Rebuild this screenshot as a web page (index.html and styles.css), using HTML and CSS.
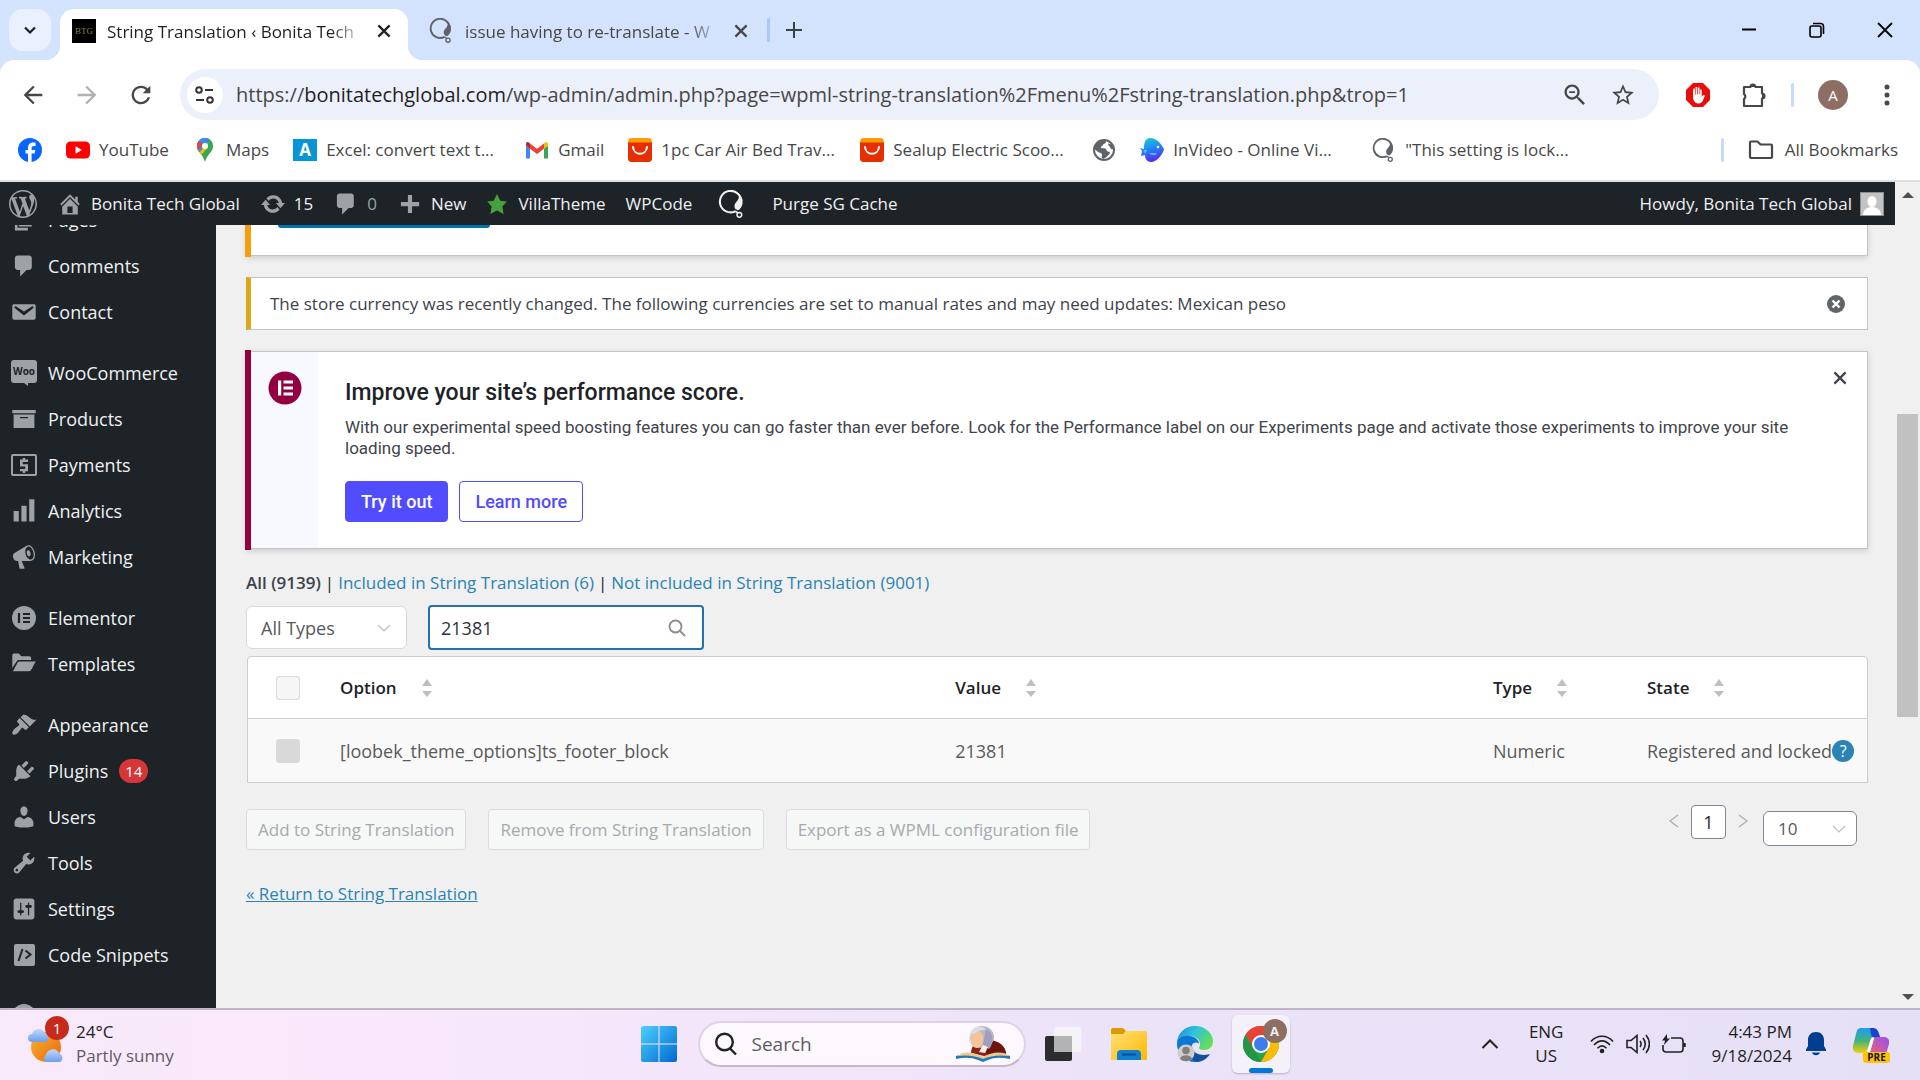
FILE: index.html
```html
<!DOCTYPE html>
<html lang="en">
<head>
<meta charset="utf-8">
<title>String Translation ‹ Bonita Tech Global</title>
<link rel="stylesheet" href="styles.css">
</head>
<body>
<svg class="defs" aria-hidden="true">
  <defs>
    <symbol id="i-x" viewBox="0 0 16 16"><path d="M3 3l10 10M13 3L3 13" fill="none" stroke="currentColor" stroke-width="2"/></symbol>
    <symbol id="i-wpml" viewBox="0 0 24 24"><path d="M14.500 18.400A9.200 9.200 0 1 1 20 9.500" fill="none" stroke="currentColor" stroke-width="1.800"/><path d="M18 3.500c3.800 3.500 4.400 9.500.3 13.300-1 .9-2.600.6-3.400-.5-1.300-1.800-1-4.100.6-5.700 1.900-1.900 2.900-4.300 2.500-7.100z" fill="currentColor"/><path d="M14 18.300c1.200 0 2.200.4 3 1.300" fill="none" stroke="currentColor" stroke-width="1.500"/><circle cx="18.300" cy="21.300" r="2" fill="none" stroke="currentColor" stroke-width="1.300"/></symbol>
    <symbol id="i-bag" viewBox="0 0 24 24"><rect width="24" height="24" rx="4" fill="#ff9a00"/><path d="M0 4.500h24V20a4 4 0 0 1-4 4H4a4 4 0 0 1-4-4z" fill="#e62e04"/><path d="M5 9c1 9 13 9 14 0" fill="none" stroke="#fff" stroke-width="2" stroke-linecap="round"/></symbol>
    <symbol id="i-chev" viewBox="0 0 14 14"><path d="M1 4l6 6 6-6" fill="none" stroke="currentColor" stroke-width="1.200"/></symbol>
    <symbol id="i-sort" viewBox="0 0 12 20"><path d="M6 1l5 7H1zM6 19l5-6H1z" fill="#bfbfbf"/></symbol>
    <symbol id="i-comment" viewBox="0 0 20 20"><path fill="currentColor" d="M5 2h9c1.100 0 2 .9 2 2v7c0 1.100-.9 2-2 2h-2l-5 5v-5H5c-1.100 0-2-.9-2-2V4c0-1.100.9-2 2-2z"/></symbol>
  </defs>
</svg>

<header class="browser">
  <div class="tabstrip">
    <button class="tab-search" aria-label="Search tabs"><svg width="14" height="14" viewBox="0 0 14 14"><path d="M2 4.500l5 5 5-5" fill="none" stroke="#1f1f1f" stroke-width="2.200"/></svg></button>
    <div class="tab active">
      <span class="favicon">BTG</span>
      <span class="tab-title">String Translation ‹ Bonita Tech</span>
      <button class="tab-close" aria-label="Close tab"><svg width="18" height="18"><use href="#i-x"/></svg></button>
    </div>
    <div class="tab">
      <svg class="fav" width="25" height="25"><use href="#i-wpml"/></svg>
      <span class="tab-title">issue having to re-translate - W</span>
      <button class="tab-close" aria-label="Close tab"><svg width="18" height="18"><use href="#i-x"/></svg></button>
    </div>
    <span class="vsep"></span>
    <button class="new-tab" aria-label="New tab"><svg width="18" height="18" viewBox="0 0 18 18"><path d="M9 1v16M1 9h16" stroke="#3c3f43" stroke-width="2"/></svg></button>
    <div class="win-controls">
      <button aria-label="Minimize"><svg width="16" height="16" viewBox="0 0 16 16"><path d="M1 7.500h14" stroke="#000" stroke-width="2"/></svg></button>
      <button aria-label="Restore"><svg width="16" height="16" viewBox="0 0 16 16" fill="none" stroke="#000" stroke-width="1.600"><rect x="1" y="4" width="11" height="11" rx="2"/><path d="M4 1.500h7.500a3 3 0 0 1 3 3V12"/></svg></button>
      <button aria-label="Close"><svg width="18" height="18" viewBox="0 0 18 18"><path d="M2 2l14 14M16 2L2 16" stroke="#000" stroke-width="1.800"/></svg></button>
    </div>
  </div>

  <div class="toolbar">
    <div class="nav">
      <button aria-label="Back"><svg width="28" height="28" viewBox="0 0 24 24"><path fill="#474747" d="M20 11H7.830l5.590-5.590L12 4l-8 8 8 8 1.410-1.410L7.830 13H20z"/></svg></button>
      <button aria-label="Forward"><svg width="28" height="28" viewBox="0 0 24 24"><path fill="#b0b0b0" d="M4 11h12.170l-5.590-5.590L12 4l8 8-8 8-1.410-1.410L16.170 13H4z"/></svg></button>
      <button aria-label="Reload"><svg width="28" height="28" viewBox="0 0 24 24"><path fill="#474747" d="M17.650 6.350C16.200 4.900 14.210 4 12 4c-4.420 0-7.990 3.580-7.990 8s3.570 8 7.990 8c3.730 0 6.840-2.550 7.730-6h-2.080c-.82 2.330-3.040 4-5.650 4-3.310 0-6-2.690-6-6s2.690-6 6-6c1.660 0 3.140.69 4.220 1.780L13.500 10.500H20V4z"/></svg></button>
    </div>
    <div class="omnibox">
      <span class="site-info"><svg width="22" height="22" viewBox="0 0 22 22" fill="none" stroke="#333" stroke-width="2"><circle cx="5" cy="6" r="2.800"/><path d="M11 6h8M2 16h8"/><circle cx="16" cy="16" r="2.800"/></svg></span>
      <span class="url">https://<b>bonitatechglobal.com</b>/wp-admin/admin.php?page=wpml-string-translation%2Fmenu%2Fstring-translation.php&amp;trop=1</span>
      <button aria-label="Zoom"><svg width="28" height="28" viewBox="0 0 24 24"><path fill="#474747" d="M15.500 14h-.79l-.28-.27C15.410 12.590 16 11.110 16 9.500 16 5.910 13.090 3 9.500 3S3 5.910 3 9.500 5.910 16 9.500 16c1.610 0 3.090-.59 4.230-1.570l.27.28v.79l5 4.990L20.490 19zm-6 0C7.010 14 5 11.990 5 9.500S7.010 5 9.500 5 14 7.010 14 9.500 11.990 14 9.500 14zM7 8.800h5v1.500H7z"/></svg></button>
      <button aria-label="Bookmark this tab"><svg width="26" height="26" viewBox="0 0 24 24"><path fill="#474747" d="M22 9.240l-7.190-.62L12 2 9.190 8.630 2 9.240l5.460 4.730L5.820 21 12 17.270 18.180 21l-1.630-7.030zM12 15.400l-3.760 2.270 1-4.280-3.320-2.880 4.380-.38L12 6.100l1.710 4.040 4.380.38-3.320 2.880 1 4.280z"/></svg></button>
    </div>
    <div class="ext">
      <button aria-label="AdBlock"><svg width="26" height="26" viewBox="0 0 26 26"><path d="M8 1h10l7 7v10l-7 7H8l-7-7V8z" fill="#ea0b0b"/><path d="M8 9.500v5.500c0 4 2.500 6.500 5.500 6.500 2.500 0 3.800-1.500 4.700-3.500l1.800-4.500-1.500-.7-1.800 2V7.500h-1.500v5h-.7V5.500h-1.600v7h-.7V5h-1.600v7.500h-.7V6.500H8.500z" fill="#fff"/></svg></button>
      <button aria-label="Extensions"><svg width="28" height="28" viewBox="0 0 28 28"><path d="M4 6h6.500a2.500 2.500 0 0 1 5 0H22v6.500a2 2 0 0 1 0 5V25H4v-7a3 3 0 0 0 0-5z" fill="none" stroke="#474747" stroke-width="2.200" stroke-linejoin="round"/><path d="M10.500 6a2.500 2.500 0 0 1 5 0zM22 12.500a2 2 0 0 1 0 5z" fill="#474747"/></svg></button>
      <span class="vsep"></span>
      <button class="avatar" aria-label="Profile">A</button>
      <button aria-label="Menu"><svg width="8" height="24" viewBox="0 0 8 24" fill="#474747"><circle cx="4" cy="4" r="2.500"/><circle cx="4" cy="12" r="2.500"/><circle cx="4" cy="20" r="2.500"/></svg></button>
    </div>
  </div>

  <nav class="bookmarks">
    <a href="#" aria-label="Facebook"><svg width="24" height="24" viewBox="0 0 24 24"><circle cx="12" cy="12" r="12" fill="#0866ff"/><path d="M10 24v-8.500H7.500V12H10v-1.600C10 6.400 11.800 4.500 15.600 4.500c.7 0 1.500.1 2 .3v3.300h-1.400c-1.900 0-2.600.7-2.600 2.500V12h3.700l-.7 3.500h-3V24z" fill="#fff"/></svg></a>
    <a href="#"><svg width="24" height="24" viewBox="0 0 24 24"><rect y="3.500" width="24" height="17" rx="4.500" fill="#f00"/><path d="M9.500 8.200v7.600l6.500-3.800z" fill="#fff"/></svg><span>YouTube</span></a>
    <a href="#"><svg width="24" height="24" viewBox="0 0 24 24"><path d="M12 0c4.500 0 8 3.500 8 8 0 3.800-2 5.800-4.200 8.500C13.600 19.500 13 21 12 24c-1-3-1.600-4.500-3.800-7.500C6 13.800 4 11.800 4 8c0-4.500 3.500-8 8-8z" fill="#34a853"/><path d="M20 8c0-2.900-1.500-5.400-3.800-6.800L6.300 13.900C5 12.300 4 10.600 4 8c0-4.500 3.500-8 8-8s8 3.500 8 8z" fill="#4285f4"/><path d="M5.900 2.900L9.800 6.200 4.900 12C4.300 10.800 4 9.500 4 8c0-1.900.7-3.700 1.900-5.100z" fill="#ea4335"/><path d="M6.500 14.300L14.400 5l.6 4.500-6.600 7.300c-.6-.9-1.300-1.700-1.900-2.500z" fill="#fbbc04"/><circle cx="12" cy="8" r="3" fill="#fff"/></svg><span>Maps</span></a>
    <a href="#"><i class="a-logo">A</i><span class="long">Excel: convert text t...</span></a>
    <a href="#"><svg width="24" height="24" viewBox="0 0 24 24"><path d="M1 20.500h4V10.500L1 7.500z" fill="#4285f4"/><path d="M19 20.500h4V7.500l-4 3z" fill="#34a853"/><path d="M1 7.500l4 3.200V5.500L3.500 4.300C2.200 3.400 1 4.500 1 6z" fill="#c5221f"/><path d="M19 10.700l4-3.200V6c0-1.500-1.200-2.600-2.500-1.700L19 5.500z" fill="#fbbc04"/><path d="M5 5.500l7 5.300 7-5.300v5.200L12 16l-7-5.300z" fill="#ea4335"/></svg><span>Gmail</span></a>
    <a href="#"><svg width="24" height="24"><use href="#i-bag"/></svg><span class="long">1pc Car Air Bed Trav...</span></a>
    <a href="#"><svg width="24" height="24"><use href="#i-bag"/></svg><span class="long">Sealup Electric Scoo...</span></a>
    <a href="#" aria-label="Site"><svg width="24" height="24" viewBox="0 0 24 24"><circle cx="12" cy="12" r="10" fill="#fff" stroke="#5f6368" stroke-width="2"/><path d="M3 8C5 3.500 9 2 13.500 2.500c1 1.500.3 2.700-1.300 3.200-1.700.6-1 1.800-2.500 2.500-1 .5-1.200 1.800.2 2 1.800.2 4.400-.3 4.600 1.800.1 1.300 1.300 1.500 2.500 1.700 1.300.2 1 1.800 0 2.800-2 2-3.500 3.500-6 4.500-1.500-1-1.500-2.500-1-4 .4-1.400-1-2-2.200-2.300C5.500 14.200 4 12 2.500 11zM16 5.500l4 1 1.500 4.500c-1.500.5-3-.2-3.300-1.600-.2-1.200-2.500-1.800-2.200-3.900z" fill="#5f6368"/></svg></a>
    <a href="#"><svg width="24" height="24" viewBox="0 0 24 24"><defs><linearGradient id="inv" x1="0" y1="0" x2="0.300" y2="1"><stop offset="0" stop-color="#1fd6c4"/><stop offset=".5" stop-color="#1d8cf8"/><stop offset="1" stop-color="#5b2cf0"/></linearGradient></defs><path d="M10 0c6 0 10 4 14 11-1 5-7 13-13 13-4 0-6-3-6-7l-4 1 1-5-2-3 4 1C4 5 5 0 10 0z" fill="url(#inv)"/><path d="M9 15c3 3 7 3 8 0z" fill="#3fc3ff"/><circle cx="18" cy="9" r="1.300" fill="#fff"/><path d="M4 12h3l-2 4z" fill="#6bc8ff"/></svg><span class="long">InVideo - Online Vi...</span></a>
    <a href="#" class="w"><svg width="24" height="24"><use href="#i-wpml"/></svg><span>"This setting is lock...</span></a>
    <span class="vsep"></span>
    <a href="#" class="all"><svg width="26" height="24" viewBox="0 0 26 24"><path d="M2 4.500a1 1 0 0 1 1-1h6.500l3 3H23a1 1 0 0 1 1 1V19a1 1 0 0 1-1 1H3a1 1 0 0 1-1-1z" fill="none" stroke="#474747" stroke-width="2.200"/></svg><span>All Bookmarks</span></a>
  </nav>
</header>

<div class="viewport">
  <div class="page">
    <nav class="adminbar">
      <a href="#" aria-label="WordPress"><svg width="28" height="28" viewBox="0 0 20 20"><path fill="#9ca2a7" d="M20 10c0-5.510-4.490-10-10-10C4.480 0 0 4.490 0 10c0 5.520 4.480 10 10 10 5.510 0 10-4.480 10-10zM7.780 15.370L4.370 6.220c.55-.02 1.170-.08 1.170-.08.5-.06.44-1.130-.06-1.110 0 0-1.450.11-2.370.11-.18 0-.37 0-.58-.01C4.120 2.690 6.870 1.110 10 1.110c2.330 0 4.450.87 6.050 2.340-.68-.11-1.650.39-1.650 1.580 0 .74.45 1.360.9 2.100.35.61.55 1.360.55 2.460 0 1.490-1.400 5-1.400 5l-3.030-8.370c.54-.02.82-.17.82-.17.5-.05.44-1.250-.06-1.220 0 0-1.440.12-2.380.12-.87 0-2.330-.12-2.330-.12-.5-.03-.56 1.200-.06 1.220l.92.08 1.260 3.410zM17.410 10c.24-.64.74-1.870.43-4.250.7 1.290 1.050 2.710 1.050 4.250 0 3.290-1.730 6.240-4.400 7.780.97-2.590 1.940-5.200 2.920-7.780zM6.100 18.090C3.120 16.650 1.110 13.530 1.110 10c0-1.300.23-2.480.72-3.590C3.250 10.300 4.670 14.200 6.100 18.090zm4.030-6.630l2.580 6.980c-.86.29-1.760.45-2.710.45-.79 0-1.570-.11-2.290-.33.81-2.380 1.620-4.740 2.420-7.100z"/></svg></a>
      <a href="#"><svg width="26" height="26" viewBox="0 0 20 20"><path fill="#9ca2a7" d="M16 8.500l1.530 1.530-1.060 1.060L10 4.600l-6.470 6.490-1.060-1.060L10 2.500l4 4v-2h2zm-6-2.460l6 5.990V18H4v-5.970zM12 17v-5H8v5z"/></svg><span>Bonita Tech Global</span></a>
      <a href="#"><svg width="26" height="26" viewBox="0 0 20 20"><path fill="#9ca2a7" d="M10.200 3.280c3.530 0 6.430 2.610 6.920 6h2.080l-3.500 4-3.500-4h2.320c-.45-1.970-2.210-3.450-4.320-3.450-1.450 0-2.730.71-3.540 1.780L4.950 5.660C6.230 4.200 8.110 3.280 10.200 3.280zm-.4 13.440c-3.520 0-6.430-2.610-6.920-6H.8l3.500-4 3.500 4H5.480c.45 1.970 2.210 3.450 4.320 3.450 1.450 0 2.730-.71 3.540-1.780l1.710 1.950c-1.280 1.460-3.150 2.380-5.250 2.380z"/></svg><span>15</span></a>
      <a href="#" class="muted"><svg width="26" height="26"><use href="#i-comment"/></svg><span>0</span></a>
      <a href="#"><svg width="26" height="26" viewBox="0 0 20 20"><path fill="#9ca2a7" d="M17 8.500v3.200h-5.400V17H8.400v-5.300H3V8.500h5.400V3h3.200v5.500z"/></svg><span>New</span></a>
      <a href="#" class="villa"><svg width="22" height="22" viewBox="0 0 20 20"><path fill="#46a03c" d="M10 1l3 6 6 .75-4.120 4.620L16 19l-6-3-6 3 1.130-6.630L1 7.750 7 7z"/></svg><span>VillaTheme</span></a>
      <a href="#"><span>WPCode</span></a>
      <a href="#" class="wpml" aria-label="WPML"><svg width="28" height="28"><use href="#i-wpml"/></svg></a>
      <a href="#"><span>Purge SG Cache</span></a>
      <a href="#" class="howdy"><span>Howdy, Bonita Tech Global</span><svg width="24" height="24" viewBox="0 0 24 24"><rect x=".5" y=".5" width="23" height="23" fill="#c3c3c3" stroke="#8c8f94"/><ellipse cx="12" cy="9.500" rx="4.500" ry="5.500" fill="#fff"/><path d="M3 23c0-5 4-8 9-8s9 3 9 8z" fill="#fff"/></svg></a>
    </nav>

    <div class="columns">
      <aside class="sidebar">
        <ul>
          <li><a href="#"><svg viewBox="0 0 20 20"><path d="M6 15V2h10v13zm-1 1h8v2H3V5h2z"/></svg><span>Pages</span></a></li>
          <li><a href="#"><svg viewBox="0 0 20 20"><use href="#i-comment"/></svg><span>Comments</span></a></li>
          <li><a href="#"><svg viewBox="0 0 20 20"><path d="M2.500 4h15c1 0 1.500.5 1.500 1.500v9c0 1-.5 1.500-1.500 1.500h-15c-1 0-1.500-.5-1.500-1.500v-9C1 4.500 1.500 4 2.500 4zm7.500 8.600l7-5.500c.3-.3.400-.7.100-1.100-.3-.4-.8-.4-1.100-.2L10 9.700 4 5.800c-.3-.2-.8-.2-1.100.2-.3.4-.2.8.1 1.100z"/></svg><span>Contact</span></a></li>
          <li class="gap"><a href="#"><svg viewBox="0 0 26 26"><path d="M3 0h20a3 3 0 0 1 3 3v17a3 3 0 0 1-3 3h-6v3l-4-3H3a3 3 0 0 1-3-3V3a3 3 0 0 1 3-3z"/><text x="13" y="15" text-anchor="middle" class="woo">Woo</text></svg><span>WooCommerce</span></a></li>
          <li><a href="#"><svg viewBox="0 0 20 20"><path d="M19 3v2.500H1V3zM2 6.500h16V17H2zm11 3v-1H7v1z"/></svg><span>Products</span></a></li>
          <li><a href="#"><svg viewBox="0 0 26 26"><rect x="1" y="3" width="24" height="20" rx="1" fill="none" stroke="#9ca2a7" stroke-width="2"/><path d="M17 10V7.500h-2.800V6h-2.400v1.500H9v7h5.200V17H9v2.300h2.800V21h2.400v-1.700H17v-7h-5.200V10z"/></svg><span>Payments</span></a></li>
          <li><a href="#"><svg viewBox="0 0 20 20"><path d="M18 18V1h-4v17zM12 18V6H8v12zM6 18v-8H2v8z"/></svg><span>Analytics</span></a></li>
          <li><a href="#"><svg viewBox="0 0 20 20"><path fill-rule="evenodd" d="M18.150 5.940c.46 1.620.38 3.220-.02 4.480-.42 1.280-1.260 2.180-2.300 2.480-.16.06-.26.06-.4.06-.06.02-.12.02-.18.02-.06.02-.14.02-.22.02h-6.800l2.220 5.500c.02.14-.06.26-.14.34-.08.1-.24.16-.34.16H6.950c-.1 0-.26-.06-.34-.16-.08-.08-.16-.2-.14-.34l-1-5.500H4.250l-.02-.02c-.5.06-1.080-.18-1.540-.62s-.88-1.080-1.060-1.880c-.24-.8-.2-1.560-.02-2.200.18-.62.58-1.080 1.060-1.300l.02-.02 9-5.400c.1-.06.18-.1.24-.16.06-.04.14-.08.24-.12.16-.08.28-.12.5-.18 1.040-.3 2.240.1 3.220.98s1.840 2.240 2.260 3.860zm-2.580 5.980h-.02c.4-.1.74-.34 1.040-.7.58-.7.86-1.760.86-3.040 0-.64-.1-1.300-.28-1.980-.34-1.360-1.020-2.500-1.780-3.240s-1.680-1.100-2.460-.88c-.82.22-1.400.96-1.700 2-.32 1.040-.28 2.360.06 3.720.38 1.360 1 2.500 1.800 3.240.78.74 1.620 1.100 2.480.88zm-2.540-7.080c.22-.04.42-.02.62.04.38.16.76.48 1.020 1s.42 1.200.42 1.780c0 .3-.04.56-.12.8-.18.48-.44.84-.86.94-.34.1-.8-.06-1.140-.4s-.64-.86-.78-1.500c-.18-.62-.12-1.240.02-1.720s.48-.84.82-.94z"/></svg><span>Marketing</span></a></li>
          <li class="gap"><a href="#"><svg viewBox="0 0 26 26"><circle cx="13" cy="13" r="12"/><path d="M8 8v10M12 9h7M12 13h7M12 17h7" stroke="#1d2327" stroke-width="2.200"/></svg><span>Elementor</span></a></li>
          <li><a href="#"><svg viewBox="0 0 20 20"><path d="M1 3.500C1 2.700 1.500 2 2.300 2h3.500c1 0 1.400 2 2.200 2H14c.9 0 1.500.6 1.500 1.500V7H6.500c-1 0-1.700.3-2.300 1.200L1 13z"/><path d="M6.500 8H19l-3.300 6.300c-.4.8-1 1.200-1.900 1.200H1.500l3.600-6.700c.3-.5.8-.8 1.400-.8z"/></svg><span>Templates</span></a></li>
          <li class="gap"><a href="#"><svg viewBox="0 0 20 20"><path d="M14.480 11.060L7.410 3.990l1.500-1.500c.5-.56 2.300-.47 3.510.32 1.210.8 1.430 1.280 2.910 2.100 1.180.64 2.450 1.260 4.450.85zm-.71.71L6.700 4.700 4.930 6.470c-.39.39-.39 1.020 0 1.410l1.060 1.060c.39.39.39 1.030 0 1.420-.6.6-1.430 1.110-2.210 1.690-.35.26-.7.53-1.010.84C1.430 14.230.4 16.080 1.400 17.070c.99 1 2.840-.03 4.180-1.360.31-.31.58-.66.85-1.020.57-.78 1.080-1.610 1.690-2.210.39-.39 1.020-.39 1.410 0l1.060 1.060c.39.39 1.020.39 1.410 0z"/></svg><span>Appearance</span></a></li>
          <li><a href="#"><svg viewBox="0 0 20 20"><path d="M13.110 4.360L9.870 7.600 8 5.730l3.240-3.240c.35-.34 1.050-.2 1.560.32.52.51.66 1.210.31 1.550zm-8 1.770l.91-1.120 9.010 9.010-1.190.84c-.71.71-2.630 1.160-3.820 1.160H6.140L4.900 17.260c-.59.59-1.540.59-2.120 0-.59-.58-.59-1.530 0-2.120l1.240-1.240v-3.880c0-1.130.4-3.190 1.090-3.890zm7.260 3.970l3.240-3.240c.34-.35 1.040-.21 1.550.31.52.51.66 1.210.31 1.550l-3.240 3.250z"/></svg><span>Plugins</span><b class="count">14</b></a></li>
          <li><a href="#"><svg viewBox="0 0 20 20"><path d="M10 9.250c-2.270 0-2.730-3.440-2.730-3.440C7 4.020 7.820 2 9.970 2c2.160 0 2.980 2.020 2.710 3.810 0 0-.41 3.440-2.680 3.440zm0 2.570L12.720 10c2.390 0 4.520 2.330 4.520 4.530v2.490s-3.650 1.130-7.240 1.130c-3.650 0-7.240-1.130-7.240-1.130v-2.490c0-2.250 1.940-4.480 4.470-4.480z"/></svg><span>Users</span></a></li>
          <li><a href="#"><svg viewBox="0 0 20 20"><path d="M16.680 9.770c-1.340 1.340-3.300 1.670-4.950.99l-5.410 6.520c-.99.99-2.590.99-3.580 0s-.99-2.590 0-3.570l6.520-5.420c-.68-1.650-.35-3.610.99-4.950 1.280-1.280 3.120-1.620 4.720-1.060l-2.890 2.890 2.820 2.820 2.860-2.870c.53 1.580.18 3.390-1.080 4.650zM3.810 16.210c.4.39 1.040.39 1.430 0 .4-.4.4-1.040 0-1.430-.39-.4-1.030-.4-1.430 0-.39.39-.39 1.030 0 1.430z"/></svg><span>Tools</span></a></li>
          <li><a href="#"><svg viewBox="0 0 20 20"><path d="M18 16V4c0-1.100-.9-2-2-2H4c-1.100 0-2 .9-2 2v12c0 1.100.9 2 2 2h12c1.100 0 2-.9 2-2zM8 11h1c.55 0 1 .45 1 1s-.45 1-1 1H8v1.500c0 .28-.22.5-.5.5s-.5-.22-.5-.5V13H6c-.55 0-1-.45-1-1s.45-1 1-1h1V5.500c0-.28.22-.5.5-.5s.5.22.5.5zm5-2h-1c-.55 0-1-.45-1-1s.45-1 1-1h1V5.500c0-.28.22-.5.5-.5s.5.22.5.5V7h1c.55 0 1 .45 1 1s-.45 1-1 1h-1v5.500c0 .28-.22.5-.5.5s-.5-.22-.5-.5z"/></svg><span>Settings</span></a></li>
          <li><a href="#"><svg viewBox="0 0 26 26"><rect x="3" y="2" width="21" height="22" rx="2"/><path d="M11.500 7l-4 12M14.500 8.500l5 4-5 4" fill="none" stroke="#1d2327" stroke-width="2"/></svg><span>Code Snippets</span></a></li>
          <li class="gap"><a href="#" aria-label="More"><svg viewBox="0 0 26 26"><circle cx="13" cy="13" r="12"/></svg></a></li>
        </ul>
      </aside>

      <main class="content">
        <section class="notice raised orange"><button class="update-btn" aria-label="Update"></button></section>

        <section class="notice currency">
          <p>The store currency was recently changed. The following currencies are set to manual rates and may need updates: Mexican peso</p>
          <button aria-label="Dismiss"><svg width="20" height="20" viewBox="0 0 20 20"><circle cx="10" cy="10" r="9" fill="#60646b"/><path d="M6.500 6.500l7 7M13.500 6.500l-7 7" stroke="#fff" stroke-width="2.400"/></svg></button>
        </section>

        <section class="notice raised elementor">
          <div class="e-aside"><svg width="34" height="34" viewBox="0 0 34 34"><circle cx="17" cy="17" r="16.500" fill="#93003f"/><path d="M10 9.500h3.200v15H10zM15.500 9.500H25v3h-9.500zM15.500 15.500H25v3h-9.500zM15.500 21.500H25v3h-9.500z" fill="#fff"/></svg></div>
          <div class="e-body">
            <h3>Improve your site’s performance score.</h3>
            <p>With our experimental speed boosting features you can go faster than ever before. Look for the Performance label on our Experiments page and activate those experiments to improve your site loading speed.</p>
            <div class="e-actions"><button class="e-btn solid">Try it out</button><button class="e-btn">Learn more</button></div>
          </div>
          <button class="e-close" aria-label="Dismiss"><svg width="18" height="18"><use href="#i-x"/></svg></button>
        </section>

        <p class="filters"><b>All (9139)</b><i>|</i><a href="#">Included in String Translation (6)</a><i>|</i><a href="#">Not included in String Translation (9001)</a></p>

        <div class="controls">
          <label class="select types"><select aria-label="Type"><option>All Types</option></select><svg width="14" height="14"><use href="#i-chev"/></svg></label>
          <label class="search"><input type="text" value="21381" aria-label="Search strings"><svg width="18" height="18" viewBox="0 0 18 18" fill="none" stroke="#8c8c8c" stroke-width="1.800"><circle cx="7.500" cy="7.500" r="6"/><path d="M12 12l5 5"/></svg></label>
        </div>

        <table class="strings">
          <colgroup><col class="c-check"><col class="c-option"><col><col class="c-type"><col class="c-state"></colgroup>
          <thead><tr>
            <th><input type="checkbox" aria-label="Select all"></th>
            <th><span>Option<svg width="12" height="20"><use href="#i-sort"/></svg></span></th>
            <th><span>Value<svg width="12" height="20"><use href="#i-sort"/></svg></span></th>
            <th><span>Type<svg width="12" height="20"><use href="#i-sort"/></svg></span></th>
            <th><span>State<svg width="12" height="20"><use href="#i-sort"/></svg></span></th>
          </tr></thead>
          <tbody><tr>
            <td><input type="checkbox" class="locked" disabled aria-label="Select row"></td>
            <td>[loobek_theme_options]ts_footer_block</td>
            <td>21381</td>
            <td>Numeric</td>
            <td><div class="state">Registered and locked<a href="#" class="help">?</a></div></td>
          </tr></tbody>
        </table>

        <div class="table-foot">
          <div class="bulk">
            <button disabled>Add to String Translation</button>
            <button disabled>Remove from String Translation</button>
            <button disabled>Export as a WPML configuration file</button>
          </div>
          <div class="pager">
            <button class="arrow" aria-label="Previous page"><svg width="12" height="16" viewBox="0 0 12 16"><path d="M10 2L2 8l8 6" fill="none" stroke="#b0b0b0" stroke-width="1.400"/></svg></button>
            <button class="current">1</button>
            <button class="arrow" aria-label="Next page"><svg width="12" height="16" viewBox="0 0 12 16"><path d="M2 2l8 6-8 6" fill="none" stroke="#b0b0b0" stroke-width="1.400"/></svg></button>
            <label class="select size"><select aria-label="Rows per page"><option>10</option></select><svg width="14" height="14"><use href="#i-chev"/></svg></label>
          </div>
        </div>

        <p class="return"><a href="#">« Return to String Translation</a></p>
      </main>
    </div>
  </div>
  <div class="scrollbar"><i class="up"></i><i class="track"><b></b></i><i class="down"></i></div>
</div>

<footer class="taskbar">
  <div class="weather">
    <span class="w-icon"><svg width="36" height="40" viewBox="0 0 36 40"><defs><linearGradient id="sun" x1="0" y1="0" x2="1" y2="1"><stop offset="0" stop-color="#f9b530"/><stop offset="1" stop-color="#e8650d"/></linearGradient><linearGradient id="cl" x1="0" y1="0" x2="0" y2="1"><stop offset="0" stop-color="#c0d9fc"/><stop offset="1" stop-color="#6e9eec"/></linearGradient></defs><circle cx="18" cy="23" r="15" fill="url(#sun)"/><path d="M4 18a4 4 0 0 1 0-8 7 7 0 0 1 13-1 5 5 0 0 1 1 9z" fill="url(#cl)"/><path d="M18 38a4 4 0 0 1 0-7 7 7 0 0 1 13-2 5 5 0 0 1 1 9z" fill="url(#cl)"/></svg><b>1</b></span>
    <div><p>24°C</p><p class="sub">Partly sunny</p></div>
  </div>

  <div class="apps">
    <button aria-label="Start"><svg width="36" height="36" viewBox="0 0 36 36"><defs><linearGradient id="win" x1="0" y1="0" x2="1" y2="1"><stop offset="0" stop-color="#4cd0ff"/><stop offset="1" stop-color="#0069d0"/></linearGradient></defs><path d="M2 0h15.500v17.500H0V2a2 2 0 0 1 2-2zM18.500 0H34a2 2 0 0 1 2 2v15.500H18.500zM0 18.500h17.500V36H2a2 2 0 0 1-2-2zM18.500 18.500H36V34a2 2 0 0 1-2 2H18.500z" fill="url(#win)"/></svg></button>
    <label class="tb-search"><svg width="24" height="24" viewBox="0 0 24 24" fill="none" stroke="#222" stroke-width="2.400"><circle cx="10.500" cy="10" r="8.300"/><path d="M16 16.500l6 6"/></svg><input type="text" placeholder="Search" aria-label="Search"><svg width="54" height="38" viewBox="0 0 54 38"><path d="M0 31q13-5 27 2 14-7 27-2v3q-14-3-22 1l-5 2-5-2q-9-4-22-1z" fill="#2477b8"/><path d="M15 28c0-7 5-12 12-13 10-1 21 2 23 14l-22 2z" fill="#8a2216"/><path d="M28 22l8-6c8 1 13 5 14 12l-18 2z" fill="#6d150e"/><ellipse cx="26" cy="12" rx="12" ry="11" fill="#b9b8c8"/><path d="M30 4c8 3 8 15 3 20l-6-4z" fill="#a09fbd"/><path d="M16 9c3-4 10-4 11 2 1 6-2 12-6 12-4 0-7-4-6-8z" fill="#f6c39b"/><path d="M14 9C16 1 26-1 30 5c-5-1-9 3-14 4-2 3-2 8 0 12-3-2-4-7-2-12z" fill="#dddde6"/><path d="M27 20l5 2-3 6-6-1z" fill="#f5efe4"/><path d="M1 31q4-1 5-3 11-2 21 4 10-6 21-4l5 3q-15-2-26 3Q16 29 1 31z" fill="#ecca8f"/></svg></label>
    <button class="view" aria-label="Task view"><svg width="36" height="36" viewBox="0 0 36 36"><rect y="10" width="27" height="25" rx="2" fill="#2d2d2d"/><rect x="9" y="1" width="27" height="25" rx="2" fill="#f4f4f6"/><rect x="9" y="10" width="18" height="16" fill="#b3b3b5"/></svg></button>
    <button class="files" aria-label="File Explorer"><svg width="36" height="36" viewBox="0 0 36 36"><defs><linearGradient id="fol" x1="0" y1="0" x2="1" y2="1"><stop offset="0" stop-color="#ffe07a"/><stop offset="1" stop-color="#ffb900"/></linearGradient></defs><path d="M0 4a2 2 0 0 1 2-2h10l3 3-2 4H0z" fill="#dd9a00"/><path d="M0 8h12l3-3h19a2 2 0 0 1 2 2v27H0z" fill="url(#fol)"/><path d="M6 34v-6a4 4 0 0 1 4-4h16a4 4 0 0 1 4 4v6z" fill="#0f7fd0"/><path d="M11 28.500h14" stroke="#0a4f96" stroke-width="2"/></svg></button>
    <button class="edge" aria-label="Edge"><svg width="36" height="36" viewBox="0 0 36 36"><defs><linearGradient id="eg" x1="0" y1="0" x2="1" y2=".5"><stop offset="0" stop-color="#1b86d8"/><stop offset=".5" stop-color="#2fc4dc"/><stop offset="1" stop-color="#62de58"/></linearGradient></defs><path d="M0 18C0 7 8 0 18 0c11 0 18 8 18 15 0 6-4 9-9 9-3 0-5-1-5-2 0-1 1-1 1-4 0-4-4-8-10-8C6 10 1 14 0 18z" fill="url(#eg)"/><path d="M0 18c0-6 6-9 12-8 6 0 10 4 10 8-2-2-5-2-7 1-3 5 0 14 10 15-3 2-5 2-7 2C8 36 0 28 0 18z" fill="#0a78d4"/><path d="M15 20c0 6 6 9 12 9 3 0 5-1 6-1-3 5-8 8-14 8-5-2-9-10-4-16z" fill="#124f9e"/><circle cx="9" cy="27" r="8.500" fill="#cfcdcb"/><circle cx="9" cy="24.500" r="3.800" fill="#837f7c"/><path d="M3 33c1-5 11-5 12 0-3 3-9 3-12 0z" fill="#837f7c"/></svg></button>
    <button class="chrome" aria-label="Chrome"><svg width="36" height="36" viewBox="0 0 36 36"><circle cx="18" cy="18" r="18" fill="#2ba24c"/><path d="M18 18L2.400 9A18 18 0 0 1 33.600 9z" fill="#ea4335"/><path d="M2.400 9l8 13 7.600-4z" fill="#ea4335"/><path d="M18 9h15.600A18 18 0 0 1 18 36l8-14z" fill="#fbbc04"/><path d="M2.400 9l8 13.500L18 36A18 18 0 0 1 2.400 9z" fill="#24964a"/><circle cx="18" cy="18" r="9" fill="#fff"/><circle cx="18" cy="18" r="7" fill="#3b7ded"/></svg><b>A</b></button>
  </div>

  <div class="tray">
    <button class="chev" aria-label="Show hidden icons"><svg width="18" height="12" viewBox="0 0 18 12"><path d="M1.500 10L9 2.500l7.500 7.500" fill="none" stroke="#222" stroke-width="2"/></svg></button>
    <div class="lang"><p>ENG</p><p>US</p></div>
    <div class="status">
      <svg width="24" height="20" viewBox="0 0 24 20" fill="none" stroke="#222" stroke-width="1.600"><path d="M1 7.500c6-7 16-7 22 0M4 11c5-5.500 11-5.500 16 0M7.500 14.200c3-3 6-3 9 0"/><circle cx="12" cy="17" r="1.500" fill="#222"/></svg>
      <svg width="24" height="20" viewBox="0 0 24 20" fill="none" stroke="#222" stroke-width="1.600"><path d="M1 6.500h4l6-5v17l-6-5H1zM14 7c1.500 2 1.500 4 0 6M17 4c3 4 3 8 0 12M20 1c4.500 5.500 4.500 12.500 0 18"/></svg>
      <svg width="24" height="20" viewBox="0 0 24 20" fill="none" stroke="#222" stroke-width="1.600"><path d="M9 4h9a3 3 0 0 1 3 3v8a3 3 0 0 1-3 3H4a3 3 0 0 1-3-3V11"/><path d="M5 0L0 6.500h3L2 11l6-6.500H5z" fill="#222" stroke="none"/><path d="M22.500 9v4" stroke-width="2.500"/></svg>
    </div>
    <div class="clock"><p>4:43 PM</p><p>9/18/2024</p></div>
    <svg width="20" height="24" viewBox="0 0 20 24" fill="#003e92"><path d="M10 0c5 0 8 3.500 8 8v6l2 3.500V19H0v-1.500L2 14V8c0-4.500 3-8 8-8zM6 20.500h8c-1 3.500-7 3.500-8 0z"/></svg>
    <div class="copilot"><svg width="36" height="32" viewBox="0 0 36 32"><defs><linearGradient id="cp1" x1="0" y1="0" x2="0" y2="1"><stop offset="0" stop-color="#1e9bf0"/><stop offset=".5" stop-color="#3fb27f"/><stop offset="1" stop-color="#f5d000"/></linearGradient><linearGradient id="cp2" x1="1" y1="0" x2="0" y2="1"><stop offset="0" stop-color="#9a4df5"/><stop offset="1" stop-color="#ff6b4a"/></linearGradient></defs><path d="M8 0h12c3 0 5 2 6 6l1 3h-6c-2 0-3 1-4 4l-2 7c-1 3-2 5-5 5H6c-5 0-7-3-6-7L3 6c1-4 2-6 5-6z" fill="url(#cp1)"/><path d="M17 0h3c3 0 5 2 6 6l1 3h-6c-2 0-3-1-3-3z" fill="#1744cc"/><path d="M21 9h10c4 0 6 3 5 7l-3 10c-1 3-3 5-6 5H11c4 0 5-3 6-6l3-12c0-2 0-3 1-4z" fill="url(#cp2)"/><path d="M20 10l-5 15" stroke="#fff" stroke-width="2.500"/></svg><b>PRE</b></div>
  </div>
</footer>
</body>
</html>
```
FILE: styles.css
```css
* { box-sizing: border-box; }
body { margin: 0; height: 100vh; display: flex; flex-direction: column; overflow: hidden; font: 17px/24px "Open Sans", "Noto Sans", sans-serif; color: #3c434a; background: #f0f0f1; }
p, h3, ul { margin: 0; padding: 0; }
ul { list-style: none; }
a { color: inherit; text-decoration: none; }
button { border: 0; padding: 0; background: none; font: inherit; color: inherit; display: flex; align-items: center; justify-content: center; flex: none; }
svg { flex: none; display: block; }
.defs { position: absolute; width: 0; height: 0; }
i { font-style: normal; }

/* Browser chrome */
.browser { background: #d3e3fd; flex: none; }
.tabstrip { display: flex; height: 60px; align-items: center; padding-left: 9px; }
.tab-search { width: 42px; height: 42px; border-radius: 14px; background: #e9f1fe; margin-right: 9px; }
.tab { display: flex; align-items: center; width: 348px; height: 51px; padding: 0 15px 8px 12px; align-self: flex-end; color: #474747; }
.tab + .tab { padding-left: 21px; padding-right: 6px; }
.tab.active { background: #fff; border-radius: 14px 14px 0 0; color: #1f1f1f; position: relative; }
.tab.active::before, .tab.active::after { content: ""; position: absolute; bottom: 0; width: 14px; height: 14px; }
.tab.active::before { left: -14px; background: radial-gradient(circle at 0 0, transparent 14px, #fff 14px); }
.tab.active::after { right: -14px; background: radial-gradient(circle at 100% 0, transparent 14px, #fff 14px); }
.favicon { width: 24px; height: 24px; background: #000; color: #8a7a50; font: 9px/24px "Liberation Serif", serif; text-align: center; flex: none; }
.fav { color: #5f6368; }
.tab-title { flex: 1; min-width: 0; margin: 0 10px 0 11px; padding-top: 3px; white-space: nowrap; overflow: hidden; -webkit-mask-image: linear-gradient(90deg, #000 calc(100% - 34px), transparent); mask-image: linear-gradient(90deg, #000 calc(100% - 34px), transparent); }
.vsep { width: 3px; height: 24px; border-radius: 2px; background: #c6dafc; flex: none; }
.tabstrip .vsep { margin-left: 11px; background: #a8c7fa; }
.new-tab { margin-left: 15px; }
.win-controls { display: flex; margin: 0 1px 0 auto; }
.win-controls button { width: 68px; height: 48px; }
.toolbar { display: flex; align-items: center; height: 69px; background: #fff; border-radius: 14px 14px 0 0; padding-right: 29px; }
.nav { display: flex; gap: 26px; margin: 0 25px 0 19px; }
.omnibox { flex: 1; display: flex; align-items: center; height: 51px; border-radius: 26px; background: #ebf0fa; padding: 0 23px 0 7px; font-size: 20px; }
.site-info { width: 36px; height: 36px; border-radius: 50%; background: #fff; display: grid; place-items: center; margin-right: 13px; }
.url { flex: 1; white-space: nowrap; color: #474747; }
.url b { font-weight: 400; color: #1f1f1f; }
.omnibox button + button { margin-left: 21px; }
.ext { display: flex; align-items: center; margin-left: 26px; }
.ext button:nth-child(2) { margin: 0 22px 0 29px; }
.ext .vsep { margin-left: 1px; }
.avatar { width: 30px; height: 30px; border-radius: 50%; background: #8d6e63; color: #fff; font-size: 15px; margin: 0 35px 0 24px; }
.bookmarks { display: flex; align-items: center; gap: 24px; height: 53px; background: #fff; padding: 0 22px 9px 18px; color: #474747; border-bottom: 2px solid #dcdfe3; }
.bookmarks a { display: flex; align-items: center; gap: 9px; white-space: nowrap; }
.bookmarks .long { width: 175px; }
.bookmarks .vsep { margin-left: auto; }
.bookmarks .w svg { color: #5f6368; }
.bookmarks .all { gap: 11px; }
.a-logo { width: 24px; height: 22px; display: grid; place-items: center; background: #0696d7; color: #fff; font: 700 17px/22px "Open Sans", sans-serif; }

/* Web page */
.viewport { flex: 1; min-height: 0; display: flex; }
.page { flex: 1; min-width: 0; display: flex; flex-direction: column; }
.adminbar { display: flex; align-items: center; gap: 20px; height: 43px; flex: none; background: #1d2327; color: #f0f0f1; padding: 0 11px 0 9px; position: relative; z-index: 2; }
.adminbar a { display: flex; align-items: center; gap: 8px; white-space: nowrap; }
.adminbar .villa { gap: 10px; }
.adminbar .muted { color: #9ca2a7; }
.adminbar .wpml { margin: 0 6px; }
.adminbar .howdy { margin-left: auto; }
.columns { flex: 1; min-height: 0; display: flex; overflow: hidden; }
.sidebar { width: 216px; flex: none; background: #1d2327; color: #f0f0f1; font-size: 18px; }
.sidebar ul { margin-top: -28px; }
.sidebar .gap { margin-top: 15px; }
.sidebar a { display: flex; align-items: center; height: 46px; padding-left: 11px; gap: 11px; }
.sidebar svg { width: 26px; height: 26px; fill: #9ca2a7; color: #9ca2a7; }
.woo { font: 700 10px "Open Sans", sans-serif; fill: #1d2327; }
.count { min-width: 29px; height: 24px; border-radius: 12px; background: #d63638; color: #fff; font: 400 15px/24px "Open Sans", sans-serif; text-align: center; }
.content { flex: 1; min-width: 0; padding: 0 27px 0 30px; background: #f0f0f0; }

.notice { background: #fff; border: 1px solid #c3c4c7; position: relative; }
.raised { box-shadow: 0 2px 6px rgba(0, 0, 0, .15); }
.raised::before { content: ""; position: absolute; left: -2px; top: -2px; bottom: -2px; width: 6px; background: #93003f; }
.orange { height: 31px; border-top: 0; }
.orange::before { background: #f59e0b; }
.update-btn { width: 212px; height: 3px; margin-left: 31px; background: #0073aa; border-radius: 0 0 4px 4px; }
.currency { margin-top: 21px; height: 53px; border-left: 5px solid #dba617; display: flex; align-items: center; justify-content: space-between; padding: 0 21px 0 19px; white-space: nowrap; }
.elementor { margin-top: 21px; display: flex; min-height: 197px; font-family: Roboto, sans-serif; }
.e-aside { width: 71px; background: #f8f8ff; display: flex; justify-content: center; align-items: flex-start; padding: 19px 0 0 4px; }
.e-body { flex: 1; padding: 27px 28px 26px 27px; }
.e-body h3 { font-size: 23px; line-height: 27px; font-weight: 500; color: #1d2327; }
.e-body p { margin-top: 11px; line-height: 21px; color: #3f444b; }
.e-actions { display: flex; gap: 11px; margin-top: 22px; }
.e-btn { height: 41px; padding: 0 15px; border: 1px solid #524cff; border-radius: 4px; color: #524cff; font-size: 18px; font-weight: 500; }
.e-btn.solid { background: #524cff; color: #fff; }
.e-close { position: absolute; right: 18px; top: 17px; color: #3f444b; }

.filters { margin-top: 22px; white-space: nowrap; }
.filters b { font-weight: 600; }
.filters i { margin: 0 4px; color: #1d2327; }
.filters a, .return a { color: #2a83b5; }
.controls { display: flex; align-items: center; gap: 21px; margin-top: 10px; }
.select { position: relative; display: block; }
.select svg { position: absolute; right: 16px; top: 50%; margin-top: -7px; color: #bfbfbf; pointer-events: none; }
.select select { appearance: none; width: 100%; height: 100%; border: 1px solid #d9d9d9; border-radius: 6px; background: #fff; color: #595959; font: inherit; padding: 0 14px; }
.types { width: 161px; height: 43px; font-size: 18px; }
.search { display: flex; align-items: center; width: 276px; height: 45px; border: 2px solid #2271b1; border-radius: 4px; background: #fff; padding: 0 16px 0 11px; }
.search input { flex: 1; min-width: 0; border: 0; outline: 0; padding: 0; font: inherit; font-size: 18px; color: #2c3338; background: none; }

.strings { width: calc(100% - 1px); margin: 6px 0 0 1px; table-layout: fixed; border-collapse: separate; border-spacing: 0; border: 1px solid #c9ccd1; background: #fff; font-size: 18px; color: #595959; border-radius: 4px 4px 0 0; }
.c-check { width: 80px; }
.c-option { width: 38%; }
.c-type { width: 154px; }
.c-state { width: 232px; }
.strings th, .strings td { padding: 0 0 0 12px; text-align: left; white-space: nowrap; }
.strings th:first-child, .strings td:first-child { padding-left: 28px; }
.strings th { height: 62px; font-weight: 600; color: #1d2327; font-size: 17px; border-bottom: 1px solid #c9ccd1; }
.strings th span { display: flex; align-items: center; gap: 24px; }
.strings td { height: 63px; background: #f9f9f9; }
.strings input { appearance: none; display: block; margin: 0; width: 24px; height: 24px; border: 1px solid #d9d9d9; border-radius: 3px; background: #f5f5f5; }
.strings .locked { background: #d9d9d9; }
.state { display: flex; align-items: center; }
.help { width: 22px; height: 22px; border-radius: 50%; background: #2a83b5; color: #fff; font-size: 16px; line-height: 22px; text-align: center; }

.table-foot { display: flex; justify-content: space-between; align-items: flex-start; margin-top: 22px; }
.bulk { display: flex; gap: 22px; padding-top: 4px; }
.bulk button { height: 41px; padding: 0 11px; border: 1px solid #dcdcde; border-radius: 4px; background: #f6f7f7; color: #a7aaad; font-size: 17px; }
.pager { display: flex; align-items: flex-start; padding-right: 11px; }
.pager .arrow { height: 32px; margin: 0 11px; }
.pager .current { width: 35px; height: 34px; border: 1px solid #7e8993; border-radius: 4px; background: #fff; color: #1f1f1f; font-size: 18px; }
.size { width: 94px; height: 35px; margin: 6px 0 0 3px; }
.size select { border-color: #7e8993; }
.size svg { right: 11px; }
.return { margin-top: 32px; }
.return a { text-decoration: underline; }

.scrollbar { width: 25px; flex: none; display: flex; flex-direction: column; align-items: center; background: #f0f0f0; padding: 10px 0 8px; }
.scrollbar .up, .scrollbar .down { border: 6px solid transparent; }
.scrollbar .up { border-top: 0; border-bottom-color: #505050; }
.scrollbar .down { border-bottom: 0; border-top-color: #505050; }
.scrollbar .track { flex: 1; width: 21px; display: flex; flex-direction: column; }
.scrollbar .track::before { content: ""; flex: 216; }
.scrollbar .track::after { content: ""; flex: 277; }
.scrollbar .track b { flex: 303; background: #c1c1c1; }

/* Taskbar */
.taskbar { flex: none; height: 72px; border-top: 2px solid #beb4c6; display: grid; grid-template-columns: 1fr auto 1fr; align-items: center; padding: 0 31px 2px 41px; background: linear-gradient(90deg, #f8eafa, #f9e8fb 20%, #f4e6fa 35%, #ebe3f8 60%, #e6e0f7); color: #1f1f1f; }
.weather { display: flex; align-items: center; gap: 12px; margin-left: -13px; }
.w-icon { position: relative; }
.w-icon b { position: absolute; right: -5px; top: -8px; width: 24px; height: 24px; border-radius: 50%; background: #c42b1c; color: #fff; font: 400 15px/24px "Open Sans", sans-serif; text-align: center; }
.sub { color: #5f5a63; }
.apps { display: flex; align-items: center; }
.tb-search { display: flex; align-items: center; width: 328px; height: 46px; margin: 0 19px 0 21px; border: 2px solid #ddd2e8; border-bottom-color: #c4b6cd; border-radius: 23px; background: #fcf8fe; padding: 0 14px; }
.tb-search input { flex: 1; min-width: 0; margin-left: 14px; border: 0; outline: 0; background: none; font: inherit; font-size: 19px; padding: 0; }
.tb-search input::placeholder { color: #5f5a63; opacity: 1; }
.files { margin: 0 30px; }
.chrome { position: relative; width: 58px; height: 58px; margin-left: 19px; border-radius: 6px; background: #f5f1fb; box-shadow: 0 1px 2px #b9aec8; }
.chrome b { position: absolute; right: 3px; top: 4px; width: 24px; height: 24px; border-radius: 50%; background: #8d6e63; color: #eee; font: 700 13px/24px "Open Sans", sans-serif; text-align: center; }
.chrome::after { content: ""; position: absolute; bottom: 0; left: 17px; width: 24px; height: 5px; border-radius: 3px; background: #0078d4; }
.tray { display: flex; align-items: center; justify-content: flex-end; }
.lang { text-align: center; margin: 0 27px 0 30px; }
.status { display: flex; gap: 12px; }
.clock { text-align: right; margin: 0 14px 0 25px; }
.copilot { position: relative; margin-left: 27px; }
.copilot b { position: absolute; right: -1px; bottom: -3px; width: 27px; height: 11px; border-radius: 3px; background: #ffc400; color: #111; font: 700 10px/11px "Open Sans", sans-serif; text-align: center; }
```
